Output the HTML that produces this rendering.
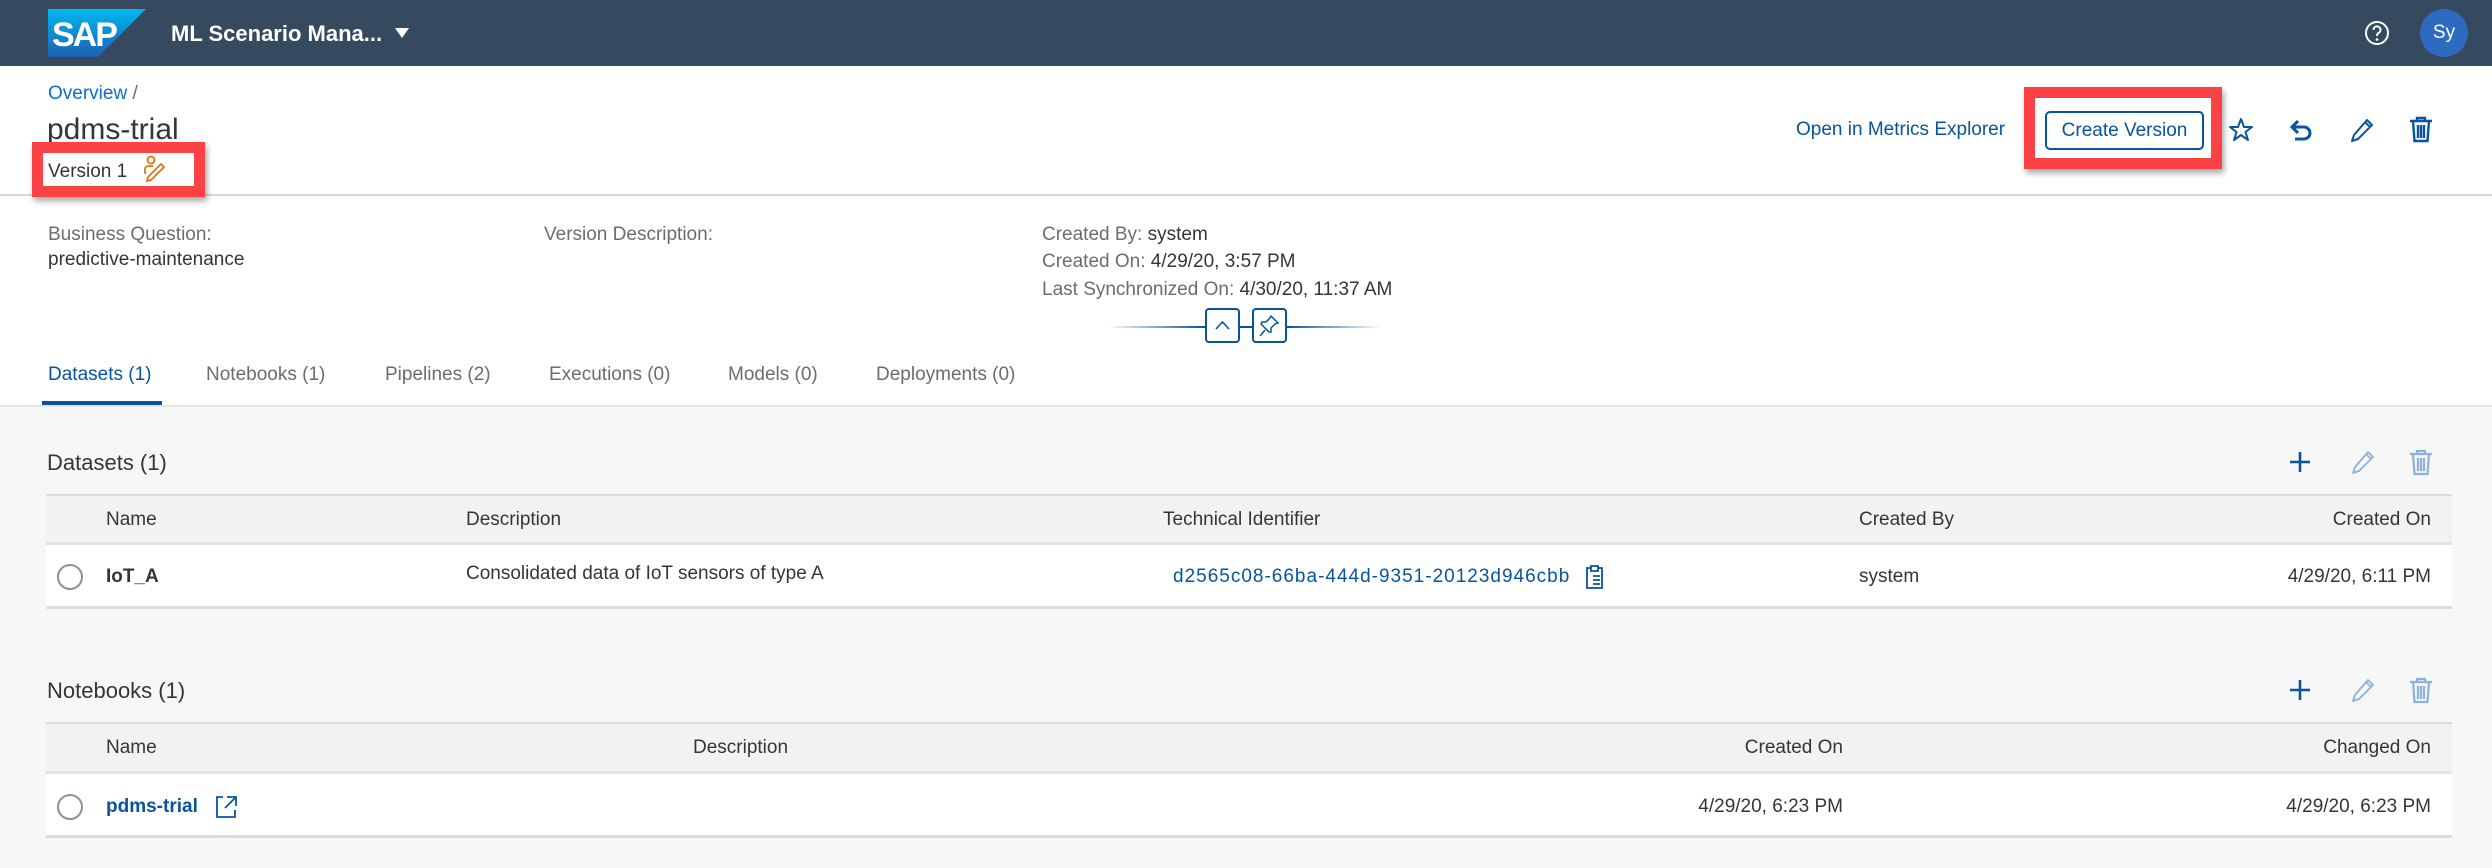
<!DOCTYPE html>
<html><head><meta charset="utf-8"><style>
*{margin:0;padding:0;box-sizing:border-box}
body{width:2492px;height:868px;overflow:hidden;background:#f7f7f7;font-family:"Liberation Sans",sans-serif;color:#32363a;position:relative}
.a{position:absolute;white-space:nowrap}
.t{font-size:19px;line-height:24px}
.lnk{color:#0a6ed1}
.lab{color:#6a6d70}
</style></head><body>
<div class="a" style="left:0;top:0;width:2492px;height:66px;background:#354a5f"></div>
<svg class="a" style="left:48px;top:9px" width="98" height="48" viewBox="0 0 98 48">
<defs><linearGradient id="g" x1="0" y1="0" x2="0" y2="1"><stop offset="0" stop-color="#00b8f1"/><stop offset="1" stop-color="#1e5fb3"/></linearGradient></defs>
<polygon points="0,0 98,0 50,48 0,48" fill="url(#g)"/>
<text x="4" y="37" font-family="Liberation Sans" font-weight="bold" font-size="34" fill="#fff" letter-spacing="-2">SAP</text>
</svg>
<div class="a" style="left:171px;top:21px;font-size:22px;line-height:26px;font-weight:bold;color:#fff">ML Scenario Mana...</div>
<svg class="a" style="left:394px;top:27px" width="16" height="12"><polygon points="1,1 15,1 8,11" fill="#fff"/></svg>
<svg class="a" style="left:2364px;top:20px" width="26" height="26" viewBox="0 0 26 26"><circle cx="13" cy="13" r="11" fill="none" stroke="#fff" stroke-width="2"/><path d="M9.5 10a3.5 3.5 0 1 1 5 3c-1.3.7-1.5 1.5-1.5 3" fill="none" stroke="#fff" stroke-width="2"/><circle cx="13" cy="19.5" r="1.3" fill="#fff"/></svg>
<div class="a" style="left:2420px;top:9px;width:48px;height:48px;border-radius:50%;background:#2d6bbf;color:#fff;font-size:19px;line-height:48px;text-align:center">Sy</div>

<div class="a" style="left:0;top:66px;width:2492px;height:339px;background:#fff"></div>
<div class="a" style="left:0;top:194px;width:2492px;height:2px;background:#d9d9d9"></div>
<div class="a t lnk" style="left:48px;top:82px">Overview <span style="color:#6a6d70">/</span></div>
<div class="a" style="left:47px;top:112px;font-size:30px;line-height:36px;color:#32363a">pdms-trial</div>
<div class="a" style="left:32px;top:142px;width:173px;height:55px;border:11px solid #fb4244;box-shadow:2px 4px 6px rgba(0,0,0,.35);background:#fff"></div>
<div class="a t" style="left:48px;top:160px">Version 1</div>
<svg class="a" style="left:142px;top:155px" width="28" height="28" viewBox="0 0 28 28"><circle cx="9" cy="5" r="3.5" fill="none" stroke="#e9730c" stroke-width="1.8"/><path d="M3 19v-5c0-2 2-3 4-3h4M6 22l13-13 3 3-13 13-4 1z" fill="none" stroke="#e9730c" stroke-width="1.8"/></svg>

<div class="a t lnk" style="left:1796px;top:118px;color:#0854a0">Open in Metrics Explorer</div>
<div class="a" style="left:2024px;top:87px;width:198px;height:82px;border:11px solid #fb4244;box-shadow:2px 4px 6px rgba(0,0,0,.35);background:#fff"></div>
<div class="a t" style="left:2045px;top:111px;width:159px;height:39px;border:2px solid #0854a0;border-radius:5px;color:#0854a0;text-align:center;line-height:35px">Create Version</div>
<svg class="a" style="left:2228px;top:117px" width="26" height="26" viewBox="0 0 26 26"><polygon points="13,2 16,10 24,10 17.5,15 20,23 13,18 6,23 8.5,15 2,10 10,10" fill="none" stroke="#0854a0" stroke-width="2" stroke-linejoin="round"/></svg>
<svg class="a" style="left:2289px;top:117px" width="26" height="26" viewBox="0 0 26 26"><path d="M9 4 3 10l6 6M3 10h12a6 6 0 0 1 0 12H6" fill="none" stroke="#0854a0" stroke-width="3"/></svg>
<svg class="a" style="left:2349px;top:117px" width="26" height="26" viewBox="0 0 26 26"><path d="M18 3l5 5L9 22l-6 2 2-6z M16 5l5 5" fill="none" stroke="#0854a0" stroke-width="2" stroke-linejoin="round"/></svg>
<svg class="a" style="left:2408px;top:115px" width="26" height="28" viewBox="0 0 26 28"><path d="M2 6h22M9 6V3h8v3M5 6l1.5 20h13L21 6M10 10v13M13 10v13M16 10v13" fill="none" stroke="#0854a0" stroke-width="2.4"/></svg>

<div class="a t lab" style="left:48px;top:223px">Business Question:</div>
<div class="a t" style="left:48px;top:248px">predictive-maintenance</div>
<div class="a t lab" style="left:544px;top:223px">Version Description:</div>
<div class="a t lab" style="left:1042px;top:223px">Created By: <span style="color:#32363a">system</span></div>
<div class="a t lab" style="left:1042px;top:250px">Created On: <span style="color:#32363a">4/29/20, 3:57 PM</span></div>
<div class="a t lab" style="left:1042px;top:278px">Last Synchronized On: <span style="color:#32363a">4/30/20, 11:37 AM</span></div>
<div class="a" style="left:1108px;top:326px;width:274px;height:2px;background:linear-gradient(90deg,rgba(8,84,160,0),#0854a0 35%,#0854a0 65%,rgba(8,84,160,0))"></div>
<div class="a" style="left:1205px;top:308px;width:35px;height:35px;border:2px solid #0854a0;border-radius:4px;background:#fff"><svg width="31" height="31" viewBox="0 0 31 31"><path d="M9 19l6.5-7 6.5 7" fill="none" stroke="#0854a0" stroke-width="1.6"/></svg></div>
<div class="a" style="left:1252px;top:308px;width:35px;height:35px;border:2px solid #0854a0;border-radius:4px;background:#fff"><svg width="31" height="31" viewBox="0 0 31 31"><path d="M17 6l7 7-3 1-4 4 0 4-2 0-8-8 1-2 4 0 4-4zM11 20l-5 6" fill="none" stroke="#0854a0" stroke-width="1.5"/></svg></div>

<div class="a t lnk" style="left:48px;top:363px;color:#0854a0">Datasets (1)</div>
<div class="a t lab" style="left:206px;top:363px">Notebooks (1)</div>
<div class="a t lab" style="left:385px;top:363px">Pipelines (2)</div>
<div class="a t lab" style="left:549px;top:363px">Executions (0)</div>
<div class="a t lab" style="left:728px;top:363px">Models (0)</div>
<div class="a t lab" style="left:876px;top:363px">Deployments (0)</div>
<div class="a" style="left:42px;top:401px;width:120px;height:4px;background:#0854a0"></div>
<div class="a" style="left:0;top:405px;width:2492px;height:2px;background:#e5e5e5"></div>

<div class="a" style="left:47px;top:449px;font-size:22px;line-height:28px">Datasets (1)</div>
<svg class="a" style="left:2288px;top:450px" width="24" height="24"><path d="M12 2v20M2 12h20" stroke="#0854a0" stroke-width="2.6"/></svg>
<svg class="a" style="left:2350px;top:449px" width="26" height="26" viewBox="0 0 26 26"><path d="M18 3l5 5L9 22l-6 2 2-6z M16 5l5 5" fill="none" stroke="#8cb2dc" stroke-width="1.8" stroke-linejoin="round"/></svg>
<svg class="a" style="left:2408px;top:448px" width="26" height="28" viewBox="0 0 26 28"><path d="M2 6h22M9 6V3h8v3M5 6l1.5 20h13L21 6M10 10v13M13 10v13M16 10v13" fill="none" stroke="#8cb2dc" stroke-width="2.2"/></svg>
<div class="a" style="left:46px;top:494px;width:2406px;height:115px;background:#fff;border-top:2px solid #dcdcdc;border-bottom:3px solid #dcdcdc"></div>
<div class="a" style="left:46px;top:496px;width:2406px;height:49px;background:#f2f2f2;border-bottom:3px solid #e2e2e2"></div>
<div class="a t" style="left:106px;top:508px">Name</div>
<div class="a t" style="left:466px;top:508px">Description</div>
<div class="a t" style="left:1163px;top:508px">Technical Identifier</div>
<div class="a t" style="left:1859px;top:508px">Created By</div>
<div class="a t" style="right:61px;top:508px">Created On</div>
<div class="a" style="left:57px;top:564px;width:26px;height:26px;border:2px solid #89919a;border-radius:50%;background:#fff"></div>
<div class="a t" style="left:106px;top:565px;font-weight:bold">IoT_A</div>
<div class="a t" style="left:466px;top:562px">Consolidated data of IoT sensors of type A</div>
<div class="a t" style="left:1173px;top:565px;color:#0854a0;letter-spacing:1px">d2565c08-66ba-444d-9351-20123d946cbb</div>
<svg class="a" style="left:1584px;top:564px" width="22" height="26" viewBox="0 0 22 26"><path d="M7 4H3v20h15V4h-4M7 2h7v5H7zM9 12h7M9 16h7M9 20h7" fill="none" stroke="#0854a0" stroke-width="1.8"/></svg>
<div class="a t" style="left:1859px;top:565px">system</div>
<div class="a t" style="right:61px;top:565px">4/29/20, 6:11 PM</div>

<div class="a" style="left:47px;top:677px;font-size:22px;line-height:28px">Notebooks (1)</div>
<svg class="a" style="left:2288px;top:678px" width="24" height="24"><path d="M12 2v20M2 12h20" stroke="#0854a0" stroke-width="2.6"/></svg>
<svg class="a" style="left:2350px;top:677px" width="26" height="26" viewBox="0 0 26 26"><path d="M18 3l5 5L9 22l-6 2 2-6z M16 5l5 5" fill="none" stroke="#8cb2dc" stroke-width="1.8" stroke-linejoin="round"/></svg>
<svg class="a" style="left:2408px;top:676px" width="26" height="28" viewBox="0 0 26 28"><path d="M2 6h22M9 6V3h8v3M5 6l1.5 20h13L21 6M10 10v13M13 10v13M16 10v13" fill="none" stroke="#8cb2dc" stroke-width="2.2"/></svg>
<div class="a" style="left:46px;top:722px;width:2406px;height:116px;background:#fff;border-top:2px solid #dcdcdc;border-bottom:3px solid #dcdcdc"></div>
<div class="a" style="left:46px;top:724px;width:2406px;height:50px;background:#f2f2f2;border-bottom:3px solid #e2e2e2"></div>
<div class="a t" style="left:106px;top:736px">Name</div>
<div class="a t" style="left:693px;top:736px">Description</div>
<div class="a t" style="right:649px;top:736px">Created On</div>
<div class="a t" style="right:61px;top:736px">Changed On</div>
<div class="a" style="left:57px;top:794px;width:26px;height:26px;border:2px solid #89919a;border-radius:50%;background:#fff"></div>
<div class="a t" style="left:106px;top:795px;font-weight:bold;color:#0854a0">pdms-trial</div>
<svg class="a" style="left:214px;top:793px" width="26" height="26" viewBox="0 0 26 26"><path d="M9 4H3v20h18v-7M13 4h9v9M22 4 11 15" fill="none" stroke="#0854a0" stroke-width="1.8"/></svg>
<div class="a t" style="right:649px;top:795px">4/29/20, 6:23 PM</div>
<div class="a t" style="right:61px;top:795px">4/29/20, 6:23 PM</div>
</body></html>
